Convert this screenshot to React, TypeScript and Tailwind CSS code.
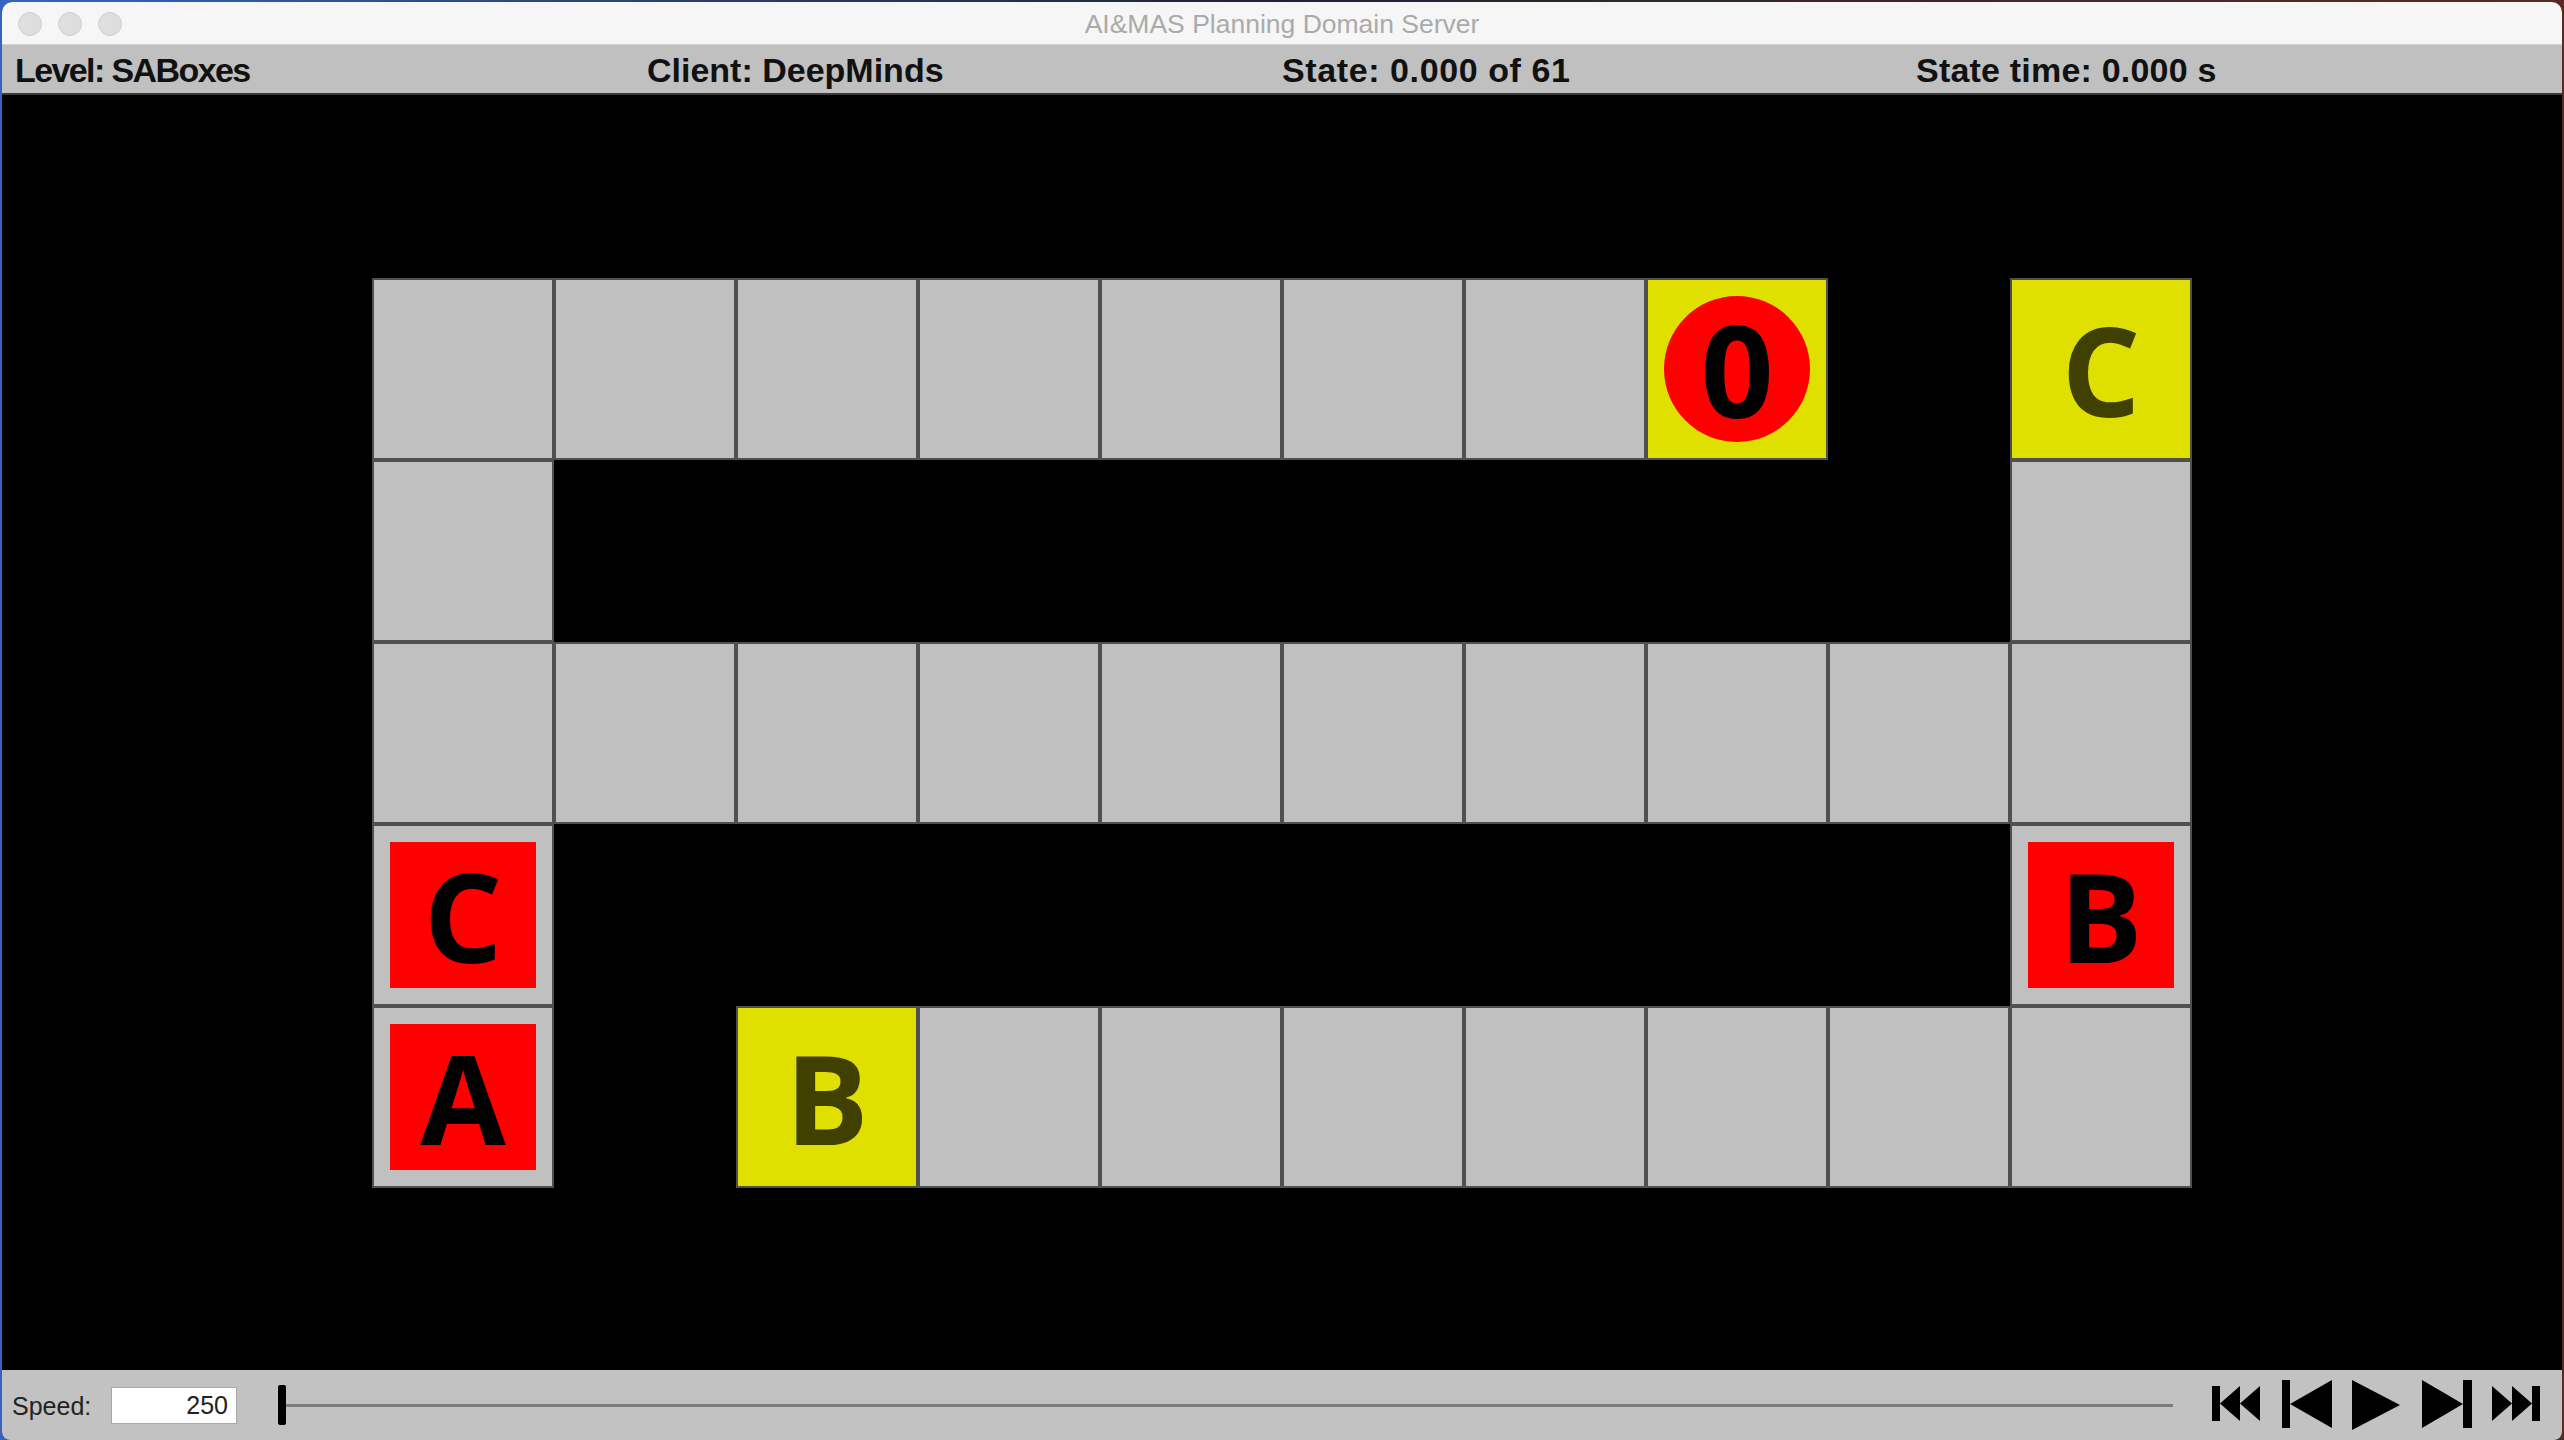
const LEVEL = [
  "- - - - - - - a0 . gC",
  "- . . . . . . . . -",
  "- - - - - - - - - -",
  "bC . . . . . . . . bB",
  "bA . gB - - - - - - -",
];

const HEADER = [
  { label: "Level: SABoxes", cls: "w-[632px] tracking-[-1.6px]" },
  { label: "Client: DeepMinds", cls: "w-[635px]" },
  { label: "State: 0.000 of 61", cls: "w-[634px] tracking-[0.6px]" },
  { label: "State time: 0.000 s", cls: "flex-1 tracking-[0.2px]" },
];

// Static replay viewer of the planning domain server.
export default function App() {
  return (
    <div className="h-[1440px] w-[2564px] overflow-hidden bg-gradient-to-r from-[#3464c0] via-[#1d2233] to-[#5a2a22] pl-[2px] pr-[2px] pt-[2px] font-['Liberation_Sans',Arial,sans-serif]">
      <div className="flex h-[1438px] flex-col overflow-hidden rounded-t-[10px] rounded-b-[8px] bg-black">
        <TitleBar />

        <div className="flex h-[50px] items-center border-b-2 border-[#3a3a3a] bg-[#c0c0c0] pl-[13px] pt-[2px] text-[34px] font-bold text-[#111]">
          {HEADER.map((h) => (
            <span key={h.label} className={`${h.cls} shrink-0 whitespace-nowrap`}>
              {h.label}
            </span>
          ))}
        </div>

        <div className="flex flex-1 items-center justify-center bg-black">
          <div className="grid grid-cols-[repeat(10,182px)] grid-rows-[repeat(5,182px)]">
            {LEVEL.flatMap((row, r) => row.split(" ").map((tok, c) => <Cell key={`${r}-${c}`} tok={tok} />))}
          </div>
        </div>

        <ControlBar />
      </div>
    </div>
  );
}

function TitleBar() {
  return (
    <div className="relative flex h-[43px] shrink-0 items-center justify-center border-b border-[#d4d4d4] bg-[#f6f6f6] pt-[4px]">
      <div className="absolute left-[16px] top-[10px] flex gap-[16px]">
        <span className="h-[24px] w-[24px] rounded-full border border-[#cfcfcf] bg-[#dedede]" />
        <span className="h-[24px] w-[24px] rounded-full border border-[#cfcfcf] bg-[#dedede]" />
        <span className="h-[24px] w-[24px] rounded-full border border-[#cfcfcf] bg-[#dedede]" />
      </div>
      <span className="text-[26.5px] text-[#aaaaaa]">AI&amp;MAS Planning Domain Server</span>
    </div>
  );
}

function Cell({ tok }: { tok: string }) {
  const letter = "font-['Open_Sans',sans-serif] font-bold leading-none";
  if (tok === ".") return <div />;
  if (tok === "-") return <div className="border-2 border-[#505050] bg-[#c0c0c0]" />;
  if (tok.startsWith("g")) {
    return (
      <div className="flex items-center justify-center border-2 border-[#505050] bg-[#e0e000]">
        <span className={`${letter} text-[124px] text-[#404000]`}>{tok[1]}</span>
      </div>
    );
  }
  if (tok.startsWith("a")) {
    return (
      <div className="flex items-center justify-center border-2 border-[#505050] bg-[#e0e000]">
        <div className="flex h-[146px] w-[146px] items-center justify-center rounded-full bg-[#ff0000]">
          <span className={`${letter} text-[128px] text-black`}>{tok[1]}</span>
        </div>
      </div>
    );
  }
  return (
    <div className="flex items-center justify-center border-2 border-[#505050] bg-[#c0c0c0]">
      <div className="flex h-[146px] w-[146px] items-center justify-center bg-[#ff0000]">
        <span className={`${letter} text-[124px] text-black`}>{tok[1]}</span>
      </div>
    </div>
  );
}

function ControlBar() {
  return (
    <div className="flex h-[70px] shrink-0 items-center bg-[#c2c2c2] pl-[10px] text-[25px] text-[#222]">
      <span className="w-[99px] shrink-0 pt-[3px]">Speed:</span>
      <div className="flex h-[37px] w-[126px] shrink-0 items-center justify-end border border-[#a8a8a8] bg-white pr-[8px] pt-[2px]">
        250
      </div>

      <div className="relative ml-[41px] flex h-[40px] flex-1 items-center">
        <div className="h-[3px] w-full bg-[#7c7c7c]" />
        <div className="absolute left-0 top-0 h-[40px] w-[8px] rounded-[2px] bg-black" />
      </div>

      <svg className="ml-[37px] mr-[20px] shrink-0" width="332" height="54" viewBox="0 0 332 54" fill="#000">
        <rect x="2" y="8" width="8" height="35" />
        <polygon points="30,8 10,25.5 30,43" />
        <polygon points="50,8 30,25.5 50,43" />

        <rect x="72" y="2" width="8" height="48" />
        <polygon points="122,2 80,26 122,50" />

        <polygon points="142,2 190,27 142,52" />

        <polygon points="212,2 253,26 212,50" />
        <rect x="253" y="2" width="9" height="48" />

        <polygon points="282,8 302,25.5 282,43" />
        <polygon points="302,8 322,25.5 302,43" />
        <rect x="322" y="8" width="8" height="35" />
      </svg>
    </div>
  );
}
